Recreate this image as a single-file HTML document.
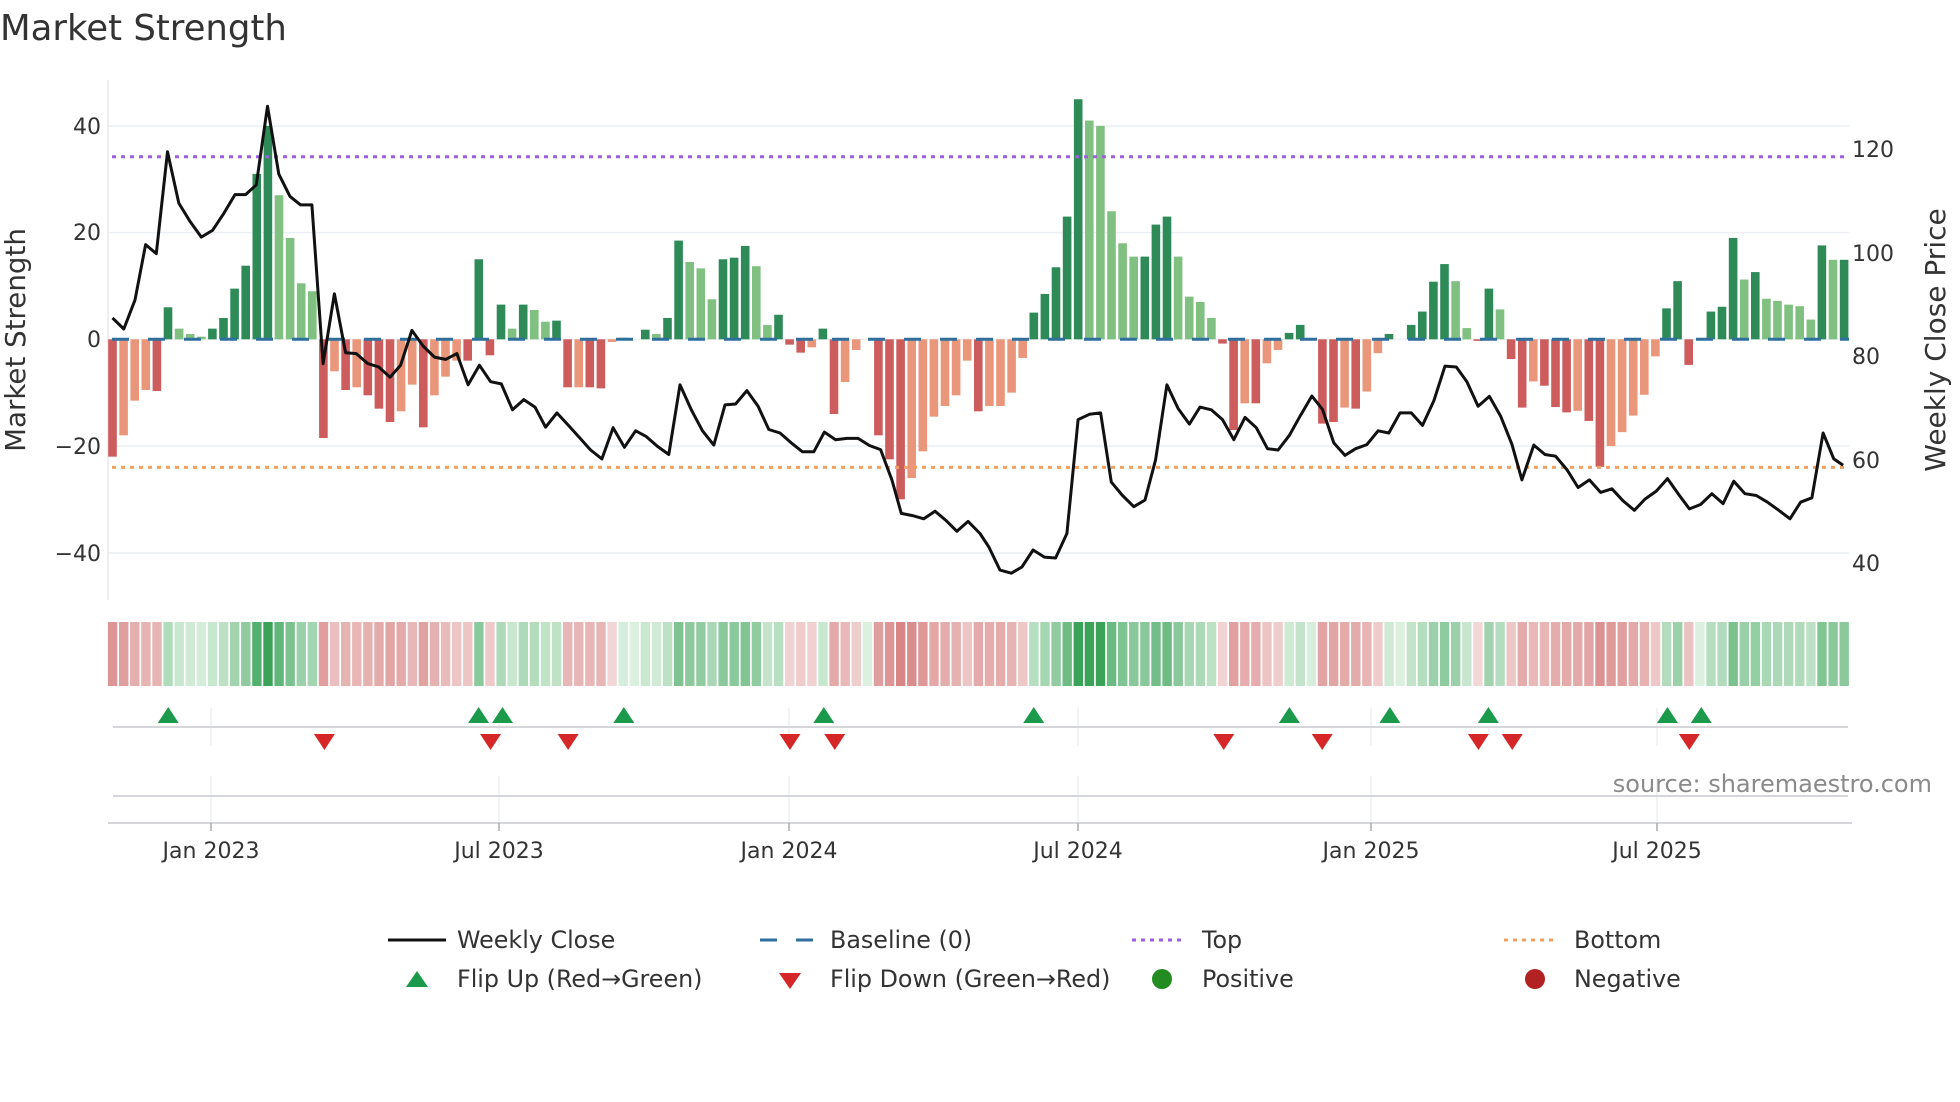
<!DOCTYPE html>
<html><head><meta charset="utf-8">
<style>
html,body{margin:0;padding:0;background:#fff;}
svg{display:block;font-family:"DejaVu Sans","Liberation Sans",sans-serif;}
</style></head>
<body>
<svg id="s" width="1960" height="1102" viewBox="0 0 1960 1102" xmlns="http://www.w3.org/2000/svg">
<rect width="1960" height="1102" fill="#fff"/>
<text x="0" y="40" font-size="35.5" fill="#333">Market Strength</text>
<g stroke="#eceff3" stroke-width="1.5">
<line x1="108" y1="126" x2="1849" y2="126"/>
<line x1="108" y1="232.6" x2="1849" y2="232.6"/>
<line x1="108" y1="339.3" x2="1849" y2="339.3"/>
<line x1="108" y1="446" x2="1849" y2="446"/>
<line x1="108" y1="553" x2="1849" y2="553"/>
</g>
<line x1="108" y1="80" x2="108" y2="600" stroke="#e6e8ec" stroke-width="1.5"/>
<g id="bars"></g>
<line x1="112" y1="339.3" x2="1849" y2="339.3" stroke="#2e6f9e" stroke-width="3" stroke-dasharray="17 19"/>
<line x1="112" y1="156.7" x2="1849" y2="156.7" stroke="#9b5fe0" stroke-width="3" stroke-dasharray="4 5"/>
<line x1="112" y1="467.4" x2="1849" y2="467.4" stroke="#f0a060" stroke-width="3" stroke-dasharray="4 5"/>
<polyline id="price" fill="none" stroke="#111" stroke-width="3" stroke-linejoin="round"/>
<g font-size="22" fill="#333" text-anchor="end">
<text x="101" y="134">40</text>
<text x="101" y="240">20</text>
<text x="101" y="347">0</text>
<text x="101" y="454">−20</text>
<text x="101" y="561">−40</text>
</g>
<g font-size="22" fill="#333">
<text x="1852" y="157">120</text>
<text x="1852" y="261">100</text>
<text x="1852" y="364">80</text>
<text x="1852" y="468">60</text>
<text x="1852" y="571">40</text>
</g>
<text transform="translate(25,340) rotate(-90)" font-size="27.7" fill="#333" text-anchor="middle">Market Strength</text>
<text transform="translate(1945,340) rotate(-90)" font-size="28" fill="#333" text-anchor="middle">Weekly Close Price</text>
<g id="heat"></g>
<g stroke="#e8ebef" stroke-width="1.2">
<line x1="211" y1="708" x2="211" y2="746"/><line x1="211" y1="776" x2="211" y2="823"/>
<line x1="499" y1="708" x2="499" y2="746"/><line x1="499" y1="776" x2="499" y2="823"/>
<line x1="789" y1="708" x2="789" y2="746"/><line x1="789" y1="776" x2="789" y2="823"/>
<line x1="1078" y1="708" x2="1078" y2="746"/><line x1="1078" y1="776" x2="1078" y2="823"/>
<line x1="1371" y1="708" x2="1371" y2="746"/><line x1="1371" y1="776" x2="1371" y2="823"/>
<line x1="1657" y1="708" x2="1657" y2="746"/><line x1="1657" y1="776" x2="1657" y2="823"/>
</g>
<line x1="113" y1="727" x2="1848" y2="727" stroke="#d4d6da" stroke-width="2"/>
<line x1="113" y1="796" x2="1848" y2="796" stroke="#d4d6da" stroke-width="2"/>
<line x1="108" y1="823" x2="1852" y2="823" stroke="#d4d6da" stroke-width="2"/>
<g stroke="#aaa" stroke-width="1.5">
<line x1="211" y1="823" x2="211" y2="831"/><line x1="499" y1="823" x2="499" y2="831"/>
<line x1="789" y1="823" x2="789" y2="831"/><line x1="1078" y1="823" x2="1078" y2="831"/>
<line x1="1371" y1="823" x2="1371" y2="831"/><line x1="1657" y1="823" x2="1657" y2="831"/>
</g>
<g id="marks"></g>
<text x="1932" y="792" font-size="24" fill="#8a8a8a" text-anchor="end">source: sharemaestro.com</text>
<g font-size="22" fill="#333" text-anchor="middle">
<text x="211" y="858">Jan 2023</text>
<text x="499" y="858">Jul 2023</text>
<text x="789" y="858">Jan 2024</text>
<text x="1078" y="858">Jul 2024</text>
<text x="1371" y="858">Jan 2025</text>
<text x="1657" y="858">Jul 2025</text>
</g>
<g font-size="23.8" fill="#333">
<line x1="388" y1="940" x2="446" y2="940" stroke="#111" stroke-width="3"/>
<text x="457" y="948">Weekly Close</text>
<line x1="760" y1="940" x2="814" y2="940" stroke="#2e6f9e" stroke-width="3" stroke-dasharray="17 19"/>
<text x="830" y="948">Baseline (0)</text>
<line x1="1132" y1="940" x2="1186" y2="940" stroke="#9b5fe0" stroke-width="3" stroke-dasharray="4 5"/>
<text x="1202" y="948">Top</text>
<line x1="1504" y1="940" x2="1558" y2="940" stroke="#f0a060" stroke-width="3" stroke-dasharray="4 5"/>
<text x="1574" y="948">Bottom</text>
<polygon points="406,987 428,987 417,971" fill="#1a9a4a"/>
<text x="457" y="987">Flip Up (Red→Green)</text>
<polygon points="779,973 801,973 790,989" fill="#d62728"/>
<text x="830" y="987">Flip Down (Green→Red)</text>
<circle cx="1162" cy="979" r="10" fill="#228b22"/>
<text x="1202" y="987">Positive</text>
<circle cx="1535" cy="979" r="10" fill="#b22222"/>
<text x="1574" y="987">Negative</text>
</g>
</svg>
<script>
var NS="http://www.w3.org/2000/svg";
var D=[[-22,'d'],[-18,'l'],[-11.5,'l'],[-9.5,'l'],[-9.7,'d'],[6,'d'],[2,'l'],[1,'l'],[0.5,'l'],[2,'d'],
[4,'d'],[9.5,'d'],[13.8,'d'],[31,'d'],[40,'d'],[27,'l'],[19,'l'],[10.5,'l'],[9,'l'],[-18.5,'d'],
[-6,'l'],[-9.5,'d'],[-9,'l'],[-10.5,'d'],[-13,'d'],[-15.5,'d'],[-13.5,'l'],[-8.5,'l'],[-16.5,'d'],[-10.5,'l'],
[-7,'l'],[-4,'l'],[-4,'d'],[15,'d'],[-3,'d'],[6.5,'d'],[2,'l'],[6.5,'d'],[5.5,'l'],[3.3,'l'],
[3.5,'d'],[-9,'d'],[-9,'l'],[-9,'d'],[-9.2,'d'],[-0.5,'l'],[0.3,'l'],[0,'l'],[1.8,'d'],[1,'l'],
[4,'d'],[18.5,'d'],[14.5,'l'],[13.3,'l'],[7.5,'l'],[15,'d'],[15.3,'d'],[17.5,'d'],[13.7,'l'],[2.7,'l'],
[4.6,'d'],[-1,'d'],[-2.5,'d'],[-1.5,'l'],[2,'d'],[-14,'d'],[-8,'l'],[-2,'l'],[0,'l'],[-18,'d'],
[-22.5,'d'],[-30,'d'],[-26,'l'],[-21,'l'],[-14.5,'l'],[-12.5,'l'],[-10.5,'l'],[-4,'l'],[-13.5,'d'],[-12.5,'l'],
[-12.5,'l'],[-10,'l'],[-3.5,'l'],[5,'d'],[8.5,'d'],[13.5,'d'],[23,'d'],[45,'d'],[41,'l'],[40,'l'],
[24,'l'],[18,'l'],[15.5,'l'],[15.5,'d'],[21.5,'d'],[23,'d'],[15.5,'l'],[8,'l'],[7,'l'],[4,'l'],
[-0.8,'d'],[-17,'d'],[-12,'l'],[-12,'d'],[-4.5,'l'],[-2,'l'],[1.2,'d'],[2.7,'d'],[0.2,'l'],[-15.8,'d'],
[-15.5,'d'],[-12.8,'l'],[-13,'d'],[-9.8,'l'],[-2.6,'l'],[1,'d'],[0,'l'],[2.7,'d'],[5.2,'d'],[10.8,'d'],
[14.1,'d'],[10.9,'l'],[2.1,'l'],[-0.3,'d'],[9.5,'d'],[5.6,'l'],[-3.7,'d'],[-12.8,'d'],[-7.9,'l'],[-8.7,'d'],
[-12.7,'d'],[-13.7,'d'],[-13.4,'l'],[-15.3,'d'],[-23.9,'d'],[-20,'l'],[-17.4,'l'],[-14.3,'l'],[-10.4,'l'],[-3.2,'l'],
[5.8,'d'],[10.9,'d'],[-4.8,'d'],[0,'l'],[5.2,'d'],[6.1,'d'],[19,'d'],[11.2,'l'],[12.6,'d'],[7.6,'l'],
[7.2,'l'],[6.5,'l'],[6.2,'l'],[3.7,'l'],[17.6,'d'],[14.9,'l'],[14.9,'d']];
function el(t,a,p){var e=document.createElementNS(NS,t);for(var k in a)e.setAttribute(k,a[k]);p.appendChild(e);return e;}
var bars=document.getElementById('bars'),heat=document.getElementById('heat');
function mix(a,b,t){var r=[];for(var i=0;i<3;i++)r.push(Math.round(a[i]+(b[i]-a[i])*t));return 'rgb('+r.join(',')+')';}
var Y0=339.3,S=5.335;
for(var i=0;i<D.length;i++){
 var v=D[i][0],x=112.5+i*11.1,c;
 if(v>=0)c=D[i][1]=='d'?'#2e8b57':'#80c080';else c=D[i][1]=='d'?'#cd5c5c':'#e9967a';
 var h=Math.abs(v)*S; if(h<0.5)h=0;
 if(h>0) el('rect',{x:x-4.3,y:v>=0?Y0-h:Y0,width:8.6,height:h,fill:c},bars);
 var t=Math.pow(Math.min(1,Math.abs(v)/40),0.7);
 var hc=v>=0?mix([220,240,224],[58,163,88],t):mix([244,218,218],[214,128,128],Math.min(1,t*1.15));
 el('rect',{x:x-4.6,y:622,width:9.4,height:64,fill:hc},heat);
}
var z1=[[180,712],[198,737],[216,672],[233,548],[250,568],[268,340],[286,455],[304,496],[322,531],[340,516],[358,478],[376,436],[393,436],[410,414],[428,238],[446,390],[464,440],[481,459],[499,459],[517,815],[535,658],[553,790],[570,792],[588,814],[606,822],[624,845],[641,818],[659,740],[677,775],[695,800],[713,805],[731,792],[749,862],[767,818],[785,855],[802,860],[820,918],[838,895],[856,912],[873,957],[891,925],[909,952],[927,980],[945,1008],[963,1028],[981,958],[999,1002],[1017,965],[1034,978],[1052,1000],[1070,1018],[1088,862],[1106,918],[1124,965],[1142,997],[1160,907],[1177,905],[1195,875],[1213,910],[1230,962],[1248,970],[1266,992],[1284,1012],[1302,1012],[1319,968],[1337,985],[1355,982],[1373,982],[1391,998],[1409,1007],[1427,1075],[1442,1150],[1460,1155],[1478,1162],[1496,1145],[1513,1165],[1531,1190],[1549,1168]];
var z2=[[0,1195],[14,1225],[32,1277],[50,1284],[67,1270],[85,1232],[103,1248],[121,1250],[139,1195],[157,940],[175,928],[193,925],[210,1080],[228,1110],[246,1135],[264,1120],[281,1030],[299,862],[317,915],[335,950],[352,912],[370,918],[388,940],[406,985],[424,935],[442,958],[460,1005],[477,1008],[495,975],[513,930],[531,887],[548,917],[566,992],[584,1020],[601,1005],[619,996],[637,965],[654,970],[672,925],[690,925],[708,953],[726,898],[744,820],[762,822],[779,855],[797,910],[815,888],[833,932],[851,995],[867,1075],[886,997],[904,1018],[921,1022],[939,1052],[957,1092],[975,1075],[993,1103],[1011,1095],[1029,1122],[1047,1143],[1064,1118],[1082,1100],[1100,1072],[1118,1108],[1135,1140],[1153,1130],[1171,1106],[1189,1128],[1206,1078],[1224,1106],[1242,1110],[1260,1125],[1278,1143],[1296,1162],[1313,1125],[1331,1115],[1349,970],[1366,1028],[1381,1042]];
var pts=[];
z1.forEach(function(p){pts.push((p[0]/1.6).toFixed(1)+','+(p[1]/2.24).toFixed(1));});
z2.forEach(function(p){pts.push((980+p[0]/1.6).toFixed(1)+','+(p[1]/2.24).toFixed(1));});
document.getElementById('price').setAttribute('points',pts.join(' '));
var marks=document.getElementById('marks');
function mx(x){return 211+(x-211)*0.99484;}
[168,480,504,626,827,1038,1295,1396,1495,1675,1709].forEach(function(x0){var x=mx(x0);el('polygon',{points:(x-10.5)+',723 '+(x+10.5)+',723 '+x+',707',fill:'#1a9a4a'},marks);});
[325,492,570,793,838,1229,1328,1485,1519,1697].forEach(function(x0){var x=mx(x0);el('polygon',{points:(x-10.5)+',734 '+(x+10.5)+',734 '+x+',750',fill:'#d62728'},marks);});
</script>
</body></html>
